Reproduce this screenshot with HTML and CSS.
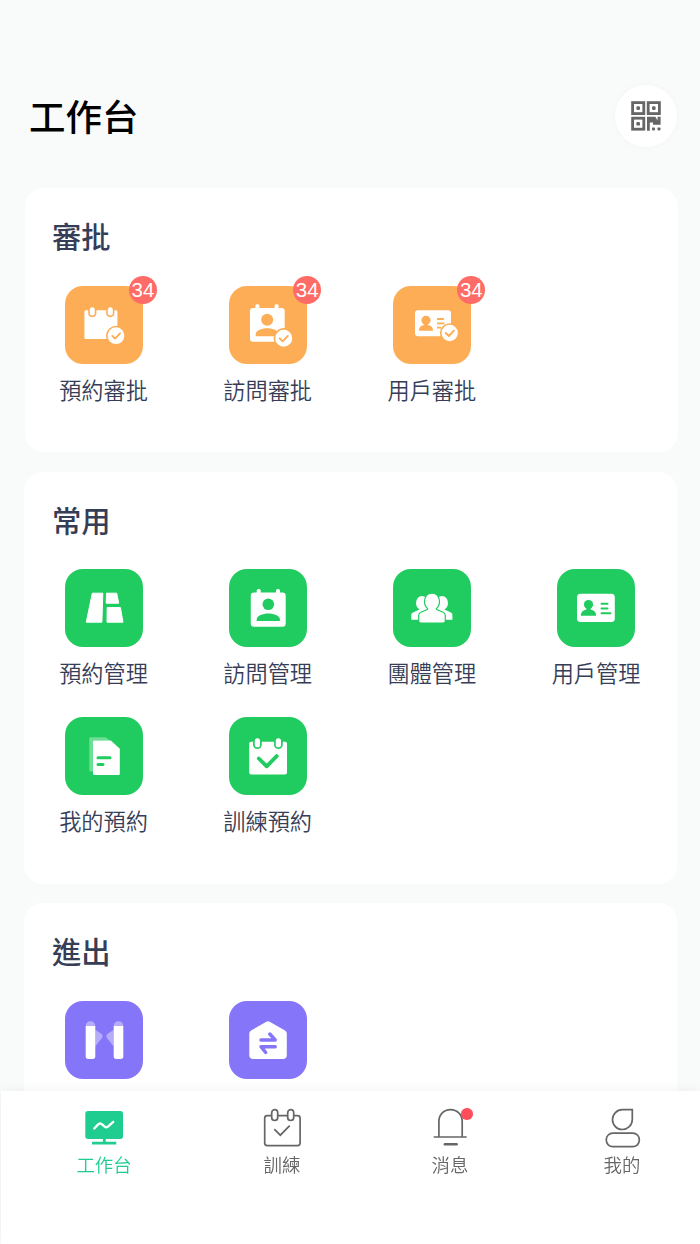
FILE: index.html
```html
<!DOCTYPE html>
<html lang="zh-Hant">
<head>
    <meta charset="UTF-8">
    <meta name="viewport" content="width=device-width, initial-scale=1.0">
    <title>工作台</title>
    <link rel="stylesheet" href="styles.css">
</head>
<body>
    <div class="page">
        <div class="header">
            <h1>工作台</h1>
            <button class="qr-button">
                <svg width="30" height="30" viewBox="0 0 30 30" fill="#666">
                    <g fill="none" stroke="#666" stroke-width="2.8">
                        <rect x="1.6" y="1.6" width="11.2" height="11"/>
                        <rect x="17.2" y="1.6" width="11.2" height="11"/>
                        <rect x="1.6" y="17.2" width="11.2" height="11"/>
                    </g>
                    <rect x="5.4" y="5.3" width="3.6" height="3.6" rx="1.2"/>
                    <rect x="21" y="5.3" width="3.6" height="3.6" rx="1.2"/>
                    <rect x="5.4" y="21" width="3.6" height="3.6" rx="1.2"/>
                    <path d="M16 15.800h8.300l2.300 3.600v-3.600h3v7.900H22v-2.200h-3.200v8.200H16z"/>
                    <rect x="21" y="26.4" width="3" height="3" rx=".8"/>
                    <rect x="26.5" y="26.4" width="3" height="3" rx=".8"/>
                </svg>
            </button>
        </div>

        <div class="card card-approve">
            <h2>審批</h2>
            <div class="grid">
                <div class="item">
                    <div class="icon orange">
                        <svg viewBox="0 0 78 78" fill="#fff">
                            <rect x="19.4" y="24.3" width="33" height="28.7" rx="1.5"/>
                            <g stroke="#fdad55" stroke-width="1.6">
                                <rect x="24" y="20.4" width="6.6" height="10" rx="3.3"/>
                                <rect x="42" y="20.4" width="6.6" height="10" rx="3.3"/>
                                <circle cx="51" cy="49.7" r="9.2"/>
                            </g>
                            <path class="tick" d="M47.3 49.8l2.8 2.8 5-5.2"/>
                        </svg>
                        <span class="badge">34</span>
                    </div>
                    <p>預約審批</p>
                </div>
                <div class="item">
                    <div class="icon orange">
                        <svg viewBox="0 0 78 78" fill="#fff">
                            <rect x="21" y="22" width="34.7" height="33.7" rx="3"/>
                            <rect x="26.4" y="18.3" width="4" height="7" rx="1.5"/>
                            <rect x="45.6" y="18.3" width="4" height="7" rx="1.5"/>
                            <g fill="#fdad55">
                                <circle cx="38.2" cy="33.7" r="6"/>
                                <path d="M26.7 50.3v-2.1c0-3.6 5.8-5.9 11.5-5.9s11.5 2.3 11.5 5.9v2.1z"/>
                            </g>
                            <circle cx="54.7" cy="52.2" r="9.3" stroke="#fdad55" stroke-width="1.6"/>
                            <path class="tick" d="M50.7 52.3l3 3 5.2-5.4"/>
                        </svg>
                        <span class="badge">34</span>
                    </div>
                    <p>訪問審批</p>
                </div>
                <div class="item">
                    <div class="icon orange">
                        <svg viewBox="0 0 78 78" fill="#fff">
                            <rect x="22" y="24.3" width="36" height="26" rx="3"/>
                            <g fill="#fdad55">
                                <circle cx="33" cy="34.3" r="4.6"/>
                                <path d="M26 44.700c0-4 2.400-5.100 5.200-5.700v-2h3.600v2c2.800.6 5.200 1.700 5.200 5.700z"/>
                            </g>
                            <path d="M44 33h6.800M44 37.300h7.400M44 41.700h4" stroke="#fdad55" stroke-width="1.8"/>
                            <circle cx="56.7" cy="47" r="9" stroke="#fdad55" stroke-width="1.6"/>
                            <path class="tick" d="M52.800 47l3 3 5.100-5.300"/>
                        </svg>
                        <span class="badge">34</span>
                    </div>
                    <p>用戶審批</p>
                </div>
            </div>
        </div>

        <div class="card card-common">
            <h2>常用</h2>
            <div class="grid">
                <div class="item">
                    <div class="icon green">
                        <svg viewBox="0 0 78 78" fill="#fff" stroke="#fff" stroke-linejoin="round">
                            <path d="M27.300 24.200h10.500l-.9 29H21.300z"/>
                            <path d="M41.500 24.200h10.200l2 10H41.200z"/>
                            <path d="M42.200 38.500h13.200l2.600 14.700H42z"/>
                        </svg>
                    </div>
                    <p>預約管理</p>
                </div>
                <div class="item">
                    <div class="icon green">
                        <svg viewBox="0 0 78 78" fill="#fff">
                            <rect x="21.8" y="23.5" width="34.9" height="34.2" rx="3.2"/>
                            <rect x="27.7" y="20" width="4" height="7" rx="1.6"/>
                            <rect x="47" y="20" width="4" height="7" rx="1.6"/>
                            <g fill="#20cc5f">
                                <circle cx="39.3" cy="35.3" r="5.8"/>
                                <path d="M27.700 52v-1.600c0-3.600 5.800-5.900 11.600-5.900s11.600 2.300 11.600 5.900V52z"/>
                            </g>
                        </svg>
                    </div>
                    <p>訪問管理</p>
                </div>
                <div class="item">
                    <div class="icon green">
                        <svg viewBox="0 0 78 78" fill="#fff">
                            <ellipse cx="29" cy="34" rx="6" ry="7"/>
                            <ellipse cx="49" cy="34" rx="6" ry="7"/>
                            <path d="M26.500 37v3.500L20 43.400c-1.200.5-1.700 1.300-1.700 2.600v4.700H34V37zM51.500 37v3.500l6.300 2.900c1.200.5 1.600 1.300 1.600 2.600v4.700H44V37z"/>
                            <path d="M39 24.700c-4.300 0-6.900 3.400-6.900 7.900 0 3 1.200 5.400 3.100 6.800v1.400l-7 3c-1.300.6-1.900 1.500-1.900 3v5.300c0 .9.500 1.400 1.400 1.400h22.600c.9 0 1.400-.5 1.400-1.400v-5.300c0-1.500-.6-2.400-1.900-3l-7-3v-1.400c1.900-1.400 3.100-3.800 3.100-6.800 0-4.500-2.600-7.900-6.900-7.900z" stroke="#20cc5f" stroke-width="2.4" paint-order="stroke"/>
                        </svg>
                    </div>
                    <p>團體管理</p>
                </div>
                <div class="item">
                    <div class="icon green">
                        <svg viewBox="0 0 78 78" fill="#fff">
                            <rect x="20" y="24.7" width="37.8" height="28.3" rx="3.5"/>
                            <g fill="#20cc5f">
                                <circle cx="31.5" cy="35.5" r="4.6"/>
                                <path d="M23.800 46.700c0-4.200 2.700-5.600 5.700-6.300v-2h4v2c3 .7 5.700 2.100 5.700 6.300z"/>
                            </g>
                            <path d="M44.500 34.800h6M44.500 39.500h6M44.500 44.300h9" stroke="#20cc5f" stroke-width="2" stroke-linecap="round"/>
                        </svg>
                    </div>
                    <p>用戶管理</p>
                </div>
                <div class="item">
                    <div class="icon green">
                        <svg viewBox="0 0 78 78" fill="#fff">
                            <path d="M25.500 20.300H40.500L45 23.400H28v31.200h-2.300c-.9 0-1.400-.5-1.400-1.400V21.500c0-.8.400-1.200 1.200-1.200z" opacity=".35"/>
                            <path d="M29.300 23.400h16.500l9 8.300v25c0 .8-.4 1.200-1.200 1.200H29.300c-.8 0-1.300-.4-1.300-1.200V24.600c0-.8.500-1.200 1.300-1.200z"/>
                            <path d="M33 40.800h12M33 47.600h5" stroke="#20cc5f" stroke-width="3" stroke-linecap="round"/>
                        </svg>
                    </div>
                    <p>我的預約</p>
                </div>
                <div class="item">
                    <div class="icon green">
                        <svg viewBox="0 0 78 78" fill="#fff">
                            <rect x="20.2" y="24.7" width="37.8" height="32.7" rx="2"/>
                            <g stroke="#20cc5f" stroke-width="1.7">
                                <rect x="24.9" y="20.4" width="7" height="10.8" rx="3.5"/>
                                <rect x="45.9" y="20.4" width="7" height="10.8" rx="3.5"/>
                            </g>
                            <path d="M29.800 41.500l7.900 7.800 10-10.200" fill="none" stroke="#20cc5f" stroke-width="3.8" stroke-linecap="round" stroke-linejoin="round"/>
                        </svg>
                    </div>
                    <p>訓練預約</p>
                </div>
            </div>
        </div>

        <div class="card card-access">
            <h2>進出</h2>
            <div class="grid">
                <div class="item">
                    <div class="icon purple">
                        <svg viewBox="0 0 78 78" fill="#fff">
                            <g opacity=".4">
                                <path d="M20.700 25c0-3 2-4.700 4.800-4.700s4.800 1.700 4.800 4.700zM48.700 25c0-3 2-4.700 4.800-4.700s4.800 1.700 4.800 4.700z"/>
                                <path d="M30.300 28.700l5.900 4c1.600 1.200 1.800 2.600.7 4.200l-6.600 8.600zM48.700 28.700l-6 4c-1.600 1.200-1.800 2.600-.7 4.200l6.700 8.600z"/>
                            </g>
                            <path d="M20.700 25h9.600v30.500c0 1.600-.9 2.500-2.500 2.500h-4.600c-1.600 0-2.500-.9-2.500-2.500zM48.700 25h9.600v30.500c0 1.600-.9 2.500-2.500 2.500h-4.600c-1.600 0-2.500-.9-2.500-2.500z"/>
                        </svg>
                    </div>
                    <p>門禁管理</p>
                </div>
                <div class="item">
                    <div class="icon purple">
                        <svg viewBox="0 0 78 78" fill="#fff">
                            <path d="M36.900 20.900c1.500-.8 2.700-.8 4.200 0l14.500 8.400c1.500.9 2.200 2.100 2.200 3.800v21c0 2.600-1.300 3.900-3.900 3.900H24.200c-2.600 0-3.900-1.300-3.900-3.900v-21c0-1.700.7-2.900 2.200-3.800z"/>
                            <path d="M32 38.900h14.200l-5.400-5.900M46.200 45.700H32l4.700 5.800" fill="none" stroke="#8575f9" stroke-width="3.5" stroke-linecap="round" stroke-linejoin="round"/>
                        </svg>
                    </div>
                    <p>進出記錄</p>
                </div>
            </div>
        </div>
    </div>

    <div class="tabbar">
        <a class="tab active">
            <svg width="40" height="42" viewBox="0 0 40 42">
                <rect x="1.3" y="4" width="37.7" height="28" rx="2.7" fill="#20cd91"/>
                <path d="M20.300 32v3.500M8 36.200h24.300" stroke="#20cd91" stroke-width="2.8"/>
                <path d="M10.300 21.500l3.600-3.900c1.600-1.600 2.900-1.600 4.500 0l1.900 1.700c1.600 1.400 2.800 1.300 4.200-.1l4.700-4.300" fill="none" stroke="#fff" stroke-width="2.3" stroke-linecap="round"/>
            </svg>
            <span>工作台</span>
        </a>
        <a class="tab">
            <svg width="40" height="42" viewBox="0 0 40 42" fill="none" stroke="#666" stroke-width="1.7">
                <path d="M9.700 8.700H5.300c-1.600 0-2.600 1-2.600 2.600v24.800c0 1.600 1 2.600 2.600 2.600h30.200c1.600 0 2.600-1 2.600-2.600V11.300c0-1.600-1-2.600-2.600-2.600h-3.800M15.700 8.700h10"/>
                <rect x="9.7" y="2.7" width="6" height="10.8" rx="3"/>
                <rect x="25.7" y="2.7" width="6" height="10.8" rx="3"/>
                <path d="M12.300 22.200l6 6 9.400-9.600"/>
            </svg>
            <span>訓練</span>
        </a>
        <a class="tab">
            <svg width="40" height="42" viewBox="0 0 40 42" fill="none" stroke="#666" stroke-width="1.7">
                <path d="M8.900 30V14.500C8.900 7.500 14 2.700 20.500 2.700S32.200 7.500 32.200 14.500V30M3.700 30h33"/>
                <path d="M14.900 37.200h11.700" stroke-width="2.6" stroke-linecap="round"/>
            </svg>
            <i class="dot"></i>
            <span>消息</span>
        </a>
        <a class="tab">
            <svg width="40" height="42" viewBox="0 0 40 42" fill="none" stroke="#666" stroke-width="1.7">
                <path d="M30.300 2.700V12.800a9.900 9.900 0 1 1-9.900-10.100z"/>
                <rect x="4.3" y="26.1" width="33" height="13.6" rx="6.5"/>
            </svg>
            <span>我的</span>
        </a>
    </div>
</body>
</html>
```
FILE: styles.css
```css
body {
    font-family: "Noto Sans CJK TC", "Noto Sans CJK SC", sans-serif;
    font-weight: 350;
    margin: 0;
    background-color: #f9fbfb;
    color: #363d56;
    height: 1244px;
    overflow: hidden;
}
h1, h2, p {
    margin: 0;
}
.page {
    padding: 85px 23.5px 0 24px;
    height: 1159px;
    overflow: hidden;
}
.header {
    display: flex;
    align-items: center;
    justify-content: space-between;
    padding-left: 5px;
    height: 62px;
    margin-bottom: 41px;
}
.header h1 {
    font-size: 36.5px;
    font-weight: 500;
    line-height: 62px;
    color: #000;
}
.qr-button {
    display: flex;
    align-items: center;
    justify-content: center;
    width: 62px;
    height: 62px;
    padding: 0;
    border: none;
    border-radius: 50%;
    background: #fff;
    box-shadow: 0 0 6px rgba(0, 0, 0, 0.03);
}
.card {
    box-sizing: border-box;
    background: #fff;
    border-radius: 19px;
    padding: 27px 0 0 28px;
}
.card h2 {
    font-size: 29.3px;
    font-weight: 500;
    line-height: 40px;
    margin-bottom: 30.5px;
}
.card-approve {
    /* 第一張卡片略微右移 */
    margin: 0 -1px 20px 1px;
    height: 264px;
    padding-left: 27px;
}
.card-common {
    height: 412px;
    margin-bottom: 19px;
}
.card-common h2 {
    margin-bottom: 30.4px;
}
.card-access {
    height: 412px;
}
.grid {
    display: grid;
    grid-template-columns: repeat(4, 90px);
    column-gap: 74.2px;
    row-gap: 28px;
    padding-left: 6.5px;
}
.item {
    display: flex;
    flex-direction: column;
    align-items: center;
    height: 120px;
}
.item p {
    font-size: 22.2px;
    line-height: 32px;
    margin-top: 9px;
    white-space: nowrap;
}
.icon {
    position: relative;
    width: 78px;
    height: 78px;
    border-radius: 18px;
}
.icon svg {
    display: block;
    width: 78px;
    height: 78px;
}
.orange {
    background: #fdad55;
}
.green {
    background: #20cc5f;
}
.purple {
    background: #8575f9;
}
.tick {
    fill: none;
    stroke: #fdad55;
    stroke-width: 1.9;
    stroke-linecap: round;
    stroke-linejoin: round;
}
.badge {
    position: absolute;
    top: -9.5px;
    left: 64.5px;
    width: 28px;
    height: 28px;
    border-radius: 50%;
    background: #ff6b66;
    color: #fff;
    font-family: "Liberation Sans", Arial, sans-serif;
    font-size: 20.5px;
    line-height: 28px;
    text-align: center;
}
.tabbar {
    position: fixed;
    top: 1091px;
    left: 1px;
    right: 0;
    bottom: 0;
    box-sizing: border-box;
    display: flex;
    align-items: flex-start;
    padding: 16px 0 0 71px;
    background: #fff;
    box-shadow: 0 0 12px rgba(0, 0, 0, 0.06);
}
.tab {
    position: relative;
    display: flex;
    flex-direction: column;
    align-items: center;
    width: 64px;
    margin-right: 108px;
    font-size: 18.4px;
    line-height: 26px;
    color: #666;
}
.tab:nth-child(1) {
    margin-right: 114px;
}
.tab:nth-child(2) {
    margin-right: 104px;
}
.tab:nth-child(4) {
    margin-right: 0;
}
.tab span {
    margin-top: 2px;
}
.tab.active {
    color: #20cd91;
}
.dot {
    position: absolute;
    top: 1px;
    left: 43px;
    width: 11.5px;
    height: 11.5px;
    border-radius: 50%;
    background: #ff4d5b;
}
```
